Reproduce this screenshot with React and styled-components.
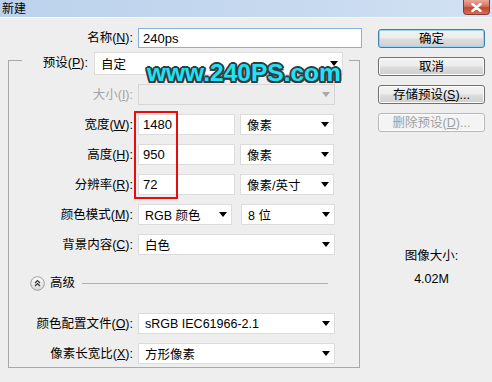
import React from "react";
import styled, { createGlobalStyle } from "styled-components";

const GlobalStyle = createGlobalStyle`
  html, body {
    margin: 0;
    padding: 0;
    background: #eeeeee;
  }
  body {
    font-family: "Liberation Sans", "Noto Sans CJK SC", sans-serif;
    font-size: 12.5px;
    color: #000;
  }
  u {
    text-decoration-thickness: 1px;
    text-underline-offset: 1px;
  }
`;

const Arrow = ({ disabled }) => (
  <svg width="8" height="5" viewBox="0 0 8 5">
    <path d="M0 0 H8 L4 5 Z" fill={disabled ? "#a8a8a8" : "#000"} />
  </svg>
);

const Select = ({ value, width, height, disabled }) => (
  <SelectBox $width={width} $height={height} $disabled={disabled}>
    <span>{value}</span>
    <Arrow disabled={disabled} />
  </SelectBox>
);

const ExpandIcon = () => (
  <svg width="15" height="15" viewBox="0 0 15 15">
    <defs>
      <linearGradient id="adv" x1="0" y1="0" x2="0" y2="1">
        <stop offset="0" stopColor="#ffffff" />
        <stop offset="1" stopColor="#d8d8d8" />
      </linearGradient>
    </defs>
    <circle cx="7.5" cy="7.5" r="6.8" fill="url(#adv)" stroke="#9b9b9b" />
    <path d="M5 7 L7.5 4.6 L10 7 M5 10 L7.5 7.6 L10 10" fill="none" stroke="#333" strokeWidth="1.2" />
  </svg>
);

const App = () => (
  <>
    <GlobalStyle />
    <Window>
      <TitleBar>
        <Title>新建</Title>
        <CloseButton>
          <svg width="11" height="9" viewBox="0 0 11 9">
            <path d="M1.5 1 L9.5 8 M9.5 1 L1.5 8" stroke="#fff" strokeWidth="2.4" strokeLinecap="round" />
          </svg>
        </CloseButton>
      </TitleBar>
      <Body>
        <LeftPane>
          <NameRow>
            <Label>名称(<u>N</u>):</Label>
            <TextInput $width={224} $focused>240ps</TextInput>
          </NameRow>
          <Group>
            <Legend>
              <PresetLabel>预设(<u>P</u>):</PresetLabel>
              <Select value="自定" width={249} height={23} />
            </Legend>
            <Fields>
              <Row>
                <Label $disabled>大小(<u>I</u>):</Label>
                <Select value="" width={197} disabled />
              </Row>
              <Row>
                <Label>宽度(<u>W</u>):</Label>
                <TextInput $width={97}>1480</TextInput>
                <Select value="像素" width={94} />
              </Row>
              <Row>
                <Label>高度(<u>H</u>):</Label>
                <TextInput $width={97}>950</TextInput>
                <Select value="像素" width={94} />
              </Row>
              <Row>
                <Label>分辨率(<u>R</u>):</Label>
                <TextInput $width={97}>72</TextInput>
                <Select value="像素/英寸" width={94} />
              </Row>
              <Row $gap={9}>
                <Label>颜色模式(<u>M</u>):</Label>
                <Select value="RGB 颜色" width={94} />
                <Select value="8 位" width={94} />
              </Row>
              <Row>
                <Label>背景内容(<u>C</u>):</Label>
                <Select value="白色" width={197} />
              </Row>
            </Fields>
            <Advanced>
              <ExpandIcon />
              <AdvancedText>高级</AdvancedText>
              <Rule />
            </Advanced>
            <Fields $top={22}>
              <Row>
                <Label>颜色配置文件(<u>O</u>):</Label>
                <Select value="sRGB IEC61966-2.1" width={197} />
              </Row>
              <Row>
                <Label>像素长宽比(<u>X</u>):</Label>
                <Select value="方形像素" width={197} />
              </Row>
            </Fields>
          </Group>
        </LeftPane>
        <RightPane>
          <Button $default>确定</Button>
          <Button>取消</Button>
          <Button>存储预设(<u>S</u>)...</Button>
          <Button $disabled>删除预设(<u>D</u>)...</Button>
          <SizeInfo>
            <span>图像大小:</span>
            <span>4.02M</span>
          </SizeInfo>
        </RightPane>
      </Body>
      <Watermark>www.240PS.com</Watermark>
      <Highlight />
    </Window>
  </>
);

const Window = styled.div`
  position: relative;
  width: 492px;
  height: 382px;
  overflow: hidden;
  background: #eeeeee;
`;

const TitleBar = styled.div`
  height: 17px;
  display: flex;
  align-items: flex-start;
  justify-content: space-between;
  background: linear-gradient(90deg, #bcd2ec 0%, #c6d9ef 60%, #d3e2f3 100%);
  border-bottom: 1px solid #f6f9fc;
`;

const Title = styled.div`
  font-family: "Noto Sans CJK SC", sans-serif;
  font-size: 12px;
  line-height: 16px;
  padding-left: 2px;
`;

const CloseButton = styled.div`
  width: 27px;
  height: 15px;
  margin-right: 2px;
  box-sizing: border-box;
  display: flex;
  align-items: center;
  justify-content: center;
  border: 1px solid #8b3a30;
  border-top: none;
  border-radius: 0 0 4px 4px;
  background: linear-gradient(180deg, #e9a99c 0%, #d7705e 45%, #c24632 55%, #d4705a 100%);
`;

const Body = styled.div`
  display: flex;
`;

const LeftPane = styled.div`
  width: 362px;
  padding: 10px 0 0 8px;
`;

const NameRow = styled.div`
  display: flex;
  align-items: center;
  gap: 5px;
  height: 20px;

  & > span:first-child {
    width: 125px;
  }
`;

const Label = styled.span`
  width: 111px;
  flex: none;
  text-align: right;
  white-space: nowrap;
  line-height: 16px;
  color: ${(p) => (p.$disabled ? "#a3a3a3" : "#000")};
`;

const TextInput = styled.div`
  width: ${(p) => p.$width}px;
  height: ${(p) => (p.$focused ? 20 : 21)}px;
  box-sizing: border-box;
  flex: none;
  display: flex;
  align-items: center;
  padding-left: 4px;
  background: #fff;
  border: 1px solid ${(p) => (p.$focused ? "#84b1e2" : "#dcdcdc")};
  font-size: 13px;
`;

const SelectBox = styled.div`
  width: ${(p) => p.$width}px;
  height: ${(p) => p.$height || 21}px;
  box-sizing: border-box;
  flex: none;
  display: flex;
  align-items: center;
  justify-content: space-between;
  padding: 0 4px 0 6px;
  background: ${(p) => (p.$disabled ? "#ededed" : "#fff")};
  border: 1px solid ${(p) => (p.$disabled ? "#d6d6d6" : "#dcdcdc")};
  white-space: nowrap;
`;

const Group = styled.fieldset`
  margin: 4px 0 0 0;
  padding: 0 0 3px 13px;
  width: 352px;
  box-sizing: border-box;
  border: 1px solid #a9a9a9;
  min-inline-size: 0;
`;

const Legend = styled.legend`
  width: 327px;
  height: 16px;
  padding: 0;
  display: flex;
  align-items: flex-start;
  gap: 6px;
`;

const PresetLabel = styled.span`
  width: 66px;
  flex: none;
  text-align: right;
  line-height: 23px;
  white-space: nowrap;
`;

const Fields = styled.div`
  display: flex;
  flex-direction: column;
  gap: 9px;
  margin-top: ${(p) => p.$top ?? 16}px;
`;

const Row = styled.div`
  display: flex;
  align-items: center;
  gap: ${(p) => p.$gap ?? 5}px;
  height: 21px;

  & > span:first-child {
    margin-right: ${(p) => (p.$gap ? 5 - p.$gap : 0)}px;
  }
`;

const Advanced = styled.div`
  display: flex;
  align-items: center;
  height: 16px;
  margin-top: 20px;
  padding-left: 8px;
`;

const AdvancedText = styled.span`
  margin-left: 5px;
  line-height: 16px;
`;

const Rule = styled.div`
  width: 246px;
  height: 1px;
  margin-left: 7px;
  background: #b0b0b0;
`;

const RightPane = styled.div`
  width: 107px;
  margin-left: 8px;
  padding-top: 11px;
  display: flex;
  flex-direction: column;
  gap: 9px;
`;

const Button = styled.div`
  height: 19px;
  box-sizing: border-box;
  display: flex;
  align-items: center;
  justify-content: center;
  border-radius: 3px;
  line-height: 16px;
  color: ${(p) => (p.$disabled ? "#a0a0a0" : "#000")};
  border: 1px solid ${(p) => (p.$disabled ? "#b5b9bc" : p.$default ? "#3c7fb1" : "#707070")};
  background: ${(p) =>
    p.$disabled
      ? "#f4f4f4"
      : "linear-gradient(180deg, #f4f4f4 0%, #ebebeb 48%, #dddddd 52%, #cfcfcf 100%)"};
  box-shadow: ${(p) => (p.$default ? "inset 0 0 0 1px #9ad3f0" : "inset 0 0 0 1px #fcfcfc")};
`;

const SizeInfo = styled.div`
  display: flex;
  flex-direction: column;
  align-items: center;
  gap: 7px;
  margin-top: 107px;
  line-height: 16px;
`;

const Watermark = styled.div`
  position: absolute;
  left: 147px;
  top: 61px;
  font-family: "Liberation Sans", sans-serif;
  font-weight: bold;
  font-size: 24.5px;
  line-height: 24.5px;
  color: #1fe3f4;
  white-space: nowrap;
  text-shadow: -2px 0 0 #333a40, 2px 0 0 #333a40, 0 -2px 0 #333a40, 0 2px 0 #333a40,
    -1.5px -1.5px 0 #333a40, 1.5px -1.5px 0 #333a40, -1.5px 1.5px 0 #333a40, 1.5px 1.5px 0 #333a40;
`;

const Highlight = styled.div`
  position: absolute;
  left: 134px;
  top: 111px;
  width: 44px;
  height: 88px;
  box-sizing: border-box;
  border: 2px solid #ec0b0b;
`;

export default App;
